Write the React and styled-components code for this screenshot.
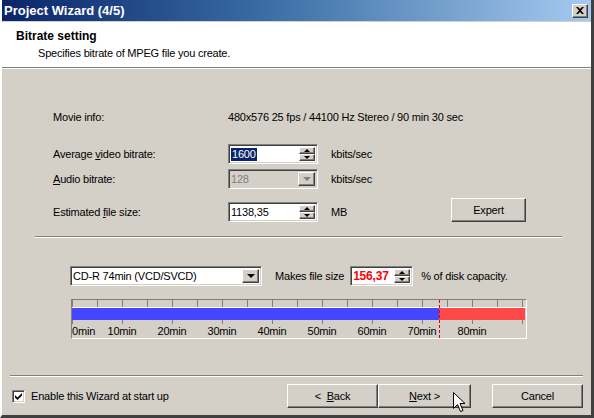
import React from 'react';
import styled, { createGlobalStyle, css } from 'styled-components';

const GlobalStyle = createGlobalStyle`
  html, body {
    margin: 0;
    padding: 0;
    background: #d4d0c8;
  }
  body {
    font-family: "Liberation Sans", Arial, sans-serif;
    font-size: 11px;
    letter-spacing: -0.2px;
    color: #000;
  }
`;

const raised = css`
  background: #d4d0c8;
  border-top: 1px solid #fff;
  border-left: 1px solid #fff;
  border-right: 1px solid #404040;
  border-bottom: 1px solid #404040;
  box-shadow: inset -1px -1px 0 #808080;
`;

const sunken = css`
  border-top: 1px solid #808080;
  border-left: 1px solid #808080;
  border-right: 1px solid #fff;
  border-bottom: 1px solid #fff;
  box-shadow: inset 1px 1px 0 #404040, inset -1px -1px 0 #d4d0c8;
`;

const Window = styled.div`
  width: 594px;
  height: 418px;
  box-sizing: border-box;
  display: flex;
  flex-direction: column;
  background: #d4d0c8;
  border-left: 2px solid #fff;
  border-right: 3px solid #404040;
  border-bottom: 3px solid #404040;
  position: relative;
  overflow: hidden;
`;

const TitleBar = styled.div`
  height: 21px;
  flex: none;
  display: flex;
  align-items: center;
  justify-content: space-between;
  padding: 0 2px 0 2px;
  background: linear-gradient(to right, #0a246a 0%, #3a6ea5 45%, #a6caf0 100%);
  color: #fff;
  font-weight: bold;
  font-size: 13px;
  letter-spacing: 0;
  border-bottom: 1px solid #d4d0c8;
`;

const CloseButton = styled.div`
  ${raised};
  width: 14px;
  height: 12px;
  display: flex;
  align-items: center;
  justify-content: center;
  margin-right: 1px;
`;

const Header = styled.div`
  height: 46px;
  flex: none;
  background: #fff;
  border-bottom: 1px solid #808080;
  box-shadow: 0 1px 0 #fff;
  padding: 7px 0 0 14px;
  box-sizing: border-box;
`;

const HeaderTitle = styled.div`
  font-weight: bold;
  font-size: 12px;
  line-height: 14px;
  letter-spacing: 0;
`;

const HeaderSub = styled.div`
  margin: 4px 0 0 22px;
  line-height: 13px;
`;

const Body = styled.div`
  flex: 1;
  display: flex;
  flex-direction: column;
  padding-top: 1px;
`;

const FieldRow = styled.div`
  display: grid;
  grid-template-columns: 175px 90px 133px 74px;
  align-items: ${(p) => p.$align || 'center'};
  margin-top: ${(p) => p.$top}px;
  padding-left: 51px;
  height: ${(p) => p.$h || 20}px;
`;

const Label = styled.span`
  white-space: nowrap;
  align-self: center;
  u { text-decoration: underline; }
`;

const Info = styled.span`
  grid-column: 2 / span 3;
  white-space: nowrap;
`;

const Unit = styled.span`
  padding-left: 13px;
  align-self: ${(p) => (p.$low ? 'end' : 'center')};
  line-height: 20px;
`;

const Field = styled.div`
  ${sunken};
  box-sizing: border-box;
  width: ${(p) => p.$w}px;
  height: 20px;
  background: ${(p) => (p.$disabled ? '#d4d0c8' : '#fff')};
  display: flex;
  align-items: stretch;
`;

const FieldText = styled.div`
  flex: 1;
  display: flex;
  align-items: center;
  padding-left: 2px;
  color: ${(p) => p.$color || '#000'};
  font-weight: ${(p) => (p.$bold ? 'bold' : 'normal')};
  font-size: ${(p) => (p.$bold ? 12 : 11)}px;
`;

const Selected = styled.span`
  background: #0a246a;
  color: #fff;
  padding: 0 1px;
  line-height: 13px;
`;

const SpinCol = styled.div`
  width: 16px;
  margin: 2px 2px 2px 0;
  display: flex;
  flex-direction: column;
`;

const SpinBtn = styled.div`
  ${raised};
  flex: 1;
  display: flex;
  align-items: center;
  justify-content: center;
`;

const DropBtn = styled.div`
  ${raised};
  width: 15px;
  margin: 2px 2px 2px 0;
  display: flex;
  align-items: center;
  justify-content: center;
`;

const Tri = styled.span`
  width: 0;
  height: 0;
  border-left: ${(p) => p.$s}px solid transparent;
  border-right: ${(p) => p.$s}px solid transparent;
  ${(p) =>
    p.$up
      ? `border-bottom: ${p.$s}px solid ${p.$c || '#000'};`
      : `border-top: ${p.$s}px solid ${p.$c || '#000'};`}
`;

const Button = styled.div`
  ${raised};
  box-sizing: border-box;
  width: ${(p) => p.$w}px;
  height: 24px;
  display: flex;
  align-items: center;
  justify-content: center;
  u { text-decoration: underline; }
`;

const Separator = styled.div`
  height: 1px;
  background: #808080;
  border-bottom: 1px solid #fff;
  margin: ${(p) => p.$m};
`;

const DiskRow = styled.div`
  display: flex;
  align-items: center;
  margin-top: 27px;
  padding-left: 68px;
  height: 21px;
`;

const Gap = styled.span`
  width: ${(p) => p.$w}px;
  flex: ${(p) => (p.$grow ? 1 : 'none')};
`;

const ScaleFrame = styled.div`
  margin: 13px 0 0 69px;
  width: 456px;
  box-sizing: border-box;
  border-top: 1px solid #808080;
  border-left: 1px solid #808080;
  border-right: 1px solid #fff;
  border-bottom: 1px solid #fff;
  position: relative;
`;

const Ticks = styled.div`
  height: ${(p) => p.$h}px;
  background-image: linear-gradient(to right, #808080 0 1px, transparent 1px);
  background-size: ${(p) => p.$step}px 100%;
  background-repeat: repeat-x;
`;

const BarLine = styled.div`
  height: 1px;
  background: #fff;
`;

const Bar = styled.div`
  height: 12px;
  display: flex;
`;

const BarFill = styled.div`
  background: ${(p) => p.$c};
  height: 100%;
`;

const Labels = styled.div`
  height: 14px;
  position: relative;
`;

const TickLabel = styled.span`
  position: absolute;
  top: 1px;
  line-height: 13px;
  white-space: nowrap;
  transform: ${(p) => (p.$first ? 'none' : 'translateX(-50%)')};
`;

const DiskMark = styled.div`
  position: absolute;
  top: 0;
  bottom: 0;
  width: 0;
  border-left: 1px dashed #e00000;
`;

const Footer = styled.div`
  margin-top: auto;
  padding-bottom: 7px;
`;

const FooterRow = styled.div`
  display: flex;
  align-items: center;
  padding: 7px 8px 0 10px;
`;

const Check = styled.div`
  ${sunken};
  background: #fff;
  width: 13px;
  height: 13px;
  box-sizing: border-box;
  display: flex;
  align-items: center;
  justify-content: center;
  margin-right: 6px;
`;

const Cursor = styled.svg`
  position: absolute;
  left: 451px;
  top: 392px;
`;

function Spin() {
  return (
    <SpinCol>
      <SpinBtn><Tri $up $s={3} /></SpinBtn>
      <SpinBtn><Tri $s={3} /></SpinBtn>
    </SpinCol>
  );
}

const labels = [0, 10, 20, 30, 40, 50, 60, 70, 80];

export default function App() {
  return (
    <>
      <GlobalStyle />
      <Window>
        <TitleBar>
          <span>Project Wizard (4/5)</span>
          <CloseButton>
            <svg width="8" height="7" viewBox="0 0 8 7">
              <path d="M0 0 L2 0 L4 2 L6 0 L8 0 L5 3.5 L8 7 L6 7 L4 5 L2 7 L0 7 L3 3.5 Z" fill="#000" />
            </svg>
          </CloseButton>
        </TitleBar>
        <Header>
          <HeaderTitle>Bitrate setting</HeaderTitle>
          <HeaderSub>Specifies bitrate of MPEG file you create.</HeaderSub>
        </Header>
        <Body>
          <FieldRow $top={41} $h={14}>
            <Label>Movie info:</Label>
            <Info>480x576 25 fps / 44100 Hz Stereo / 90 min 30 sec</Info>
          </FieldRow>
          <FieldRow $top={20}>
            <Label>Average <u>v</u>ideo bitrate:</Label>
            <Field $w={90}>
              <FieldText><Selected>1600</Selected></FieldText>
              <Spin />
            </Field>
            <Unit>kbits/sec</Unit>
          </FieldRow>
          <FieldRow $top={5}>
            <Label><u>A</u>udio bitrate:</Label>
            <Field $w={90} $disabled>
              <FieldText $color="#808080">128</FieldText>
              <DropBtn><Tri $s={4} $c="#808080" /></DropBtn>
            </Field>
            <Unit>kbits/sec</Unit>
          </FieldRow>
          <FieldRow $top={9} $h={24} $align="end">
            <Label style={{ paddingTop: 4 }}>Estimated <u>f</u>ile size:</Label>
            <Field $w={90}>
              <FieldText>1138,35</FieldText>
              <Spin />
            </Field>
            <Unit $low>MB</Unit>
            <Button $w={75}>Expert</Button>
          </FieldRow>
          <Separator $m="14px 29px 0 33px" />
          <DiskRow>
            <Field $w={192}>
              <FieldText>CD-R 74min (VCD/SVCD)</FieldText>
              <DropBtn><Tri $s={4} /></DropBtn>
            </Field>
            <Gap $w={13} />
            <span>Makes file size</span>
            <Gap $w={6} />
            <Field $w={63}>
              <FieldText $color="#ff0000" $bold>156,37</FieldText>
              <Spin />
            </Field>
            <Gap $w={8} />
            <span>% of disk capacity.</span>
          </DiskRow>
          <ScaleFrame>
            <Ticks $h={7} $step={25} />
            <BarLine />
            <Bar>
              <BarFill $c="#4646ff" style={{ width: 367 }} />
              <BarFill $c="#ff4848" style={{ width: 86 }} />
            </Bar>
            <Ticks $h={4} $step={50} />
            <Labels>
              {labels.map((m, i) => (
                <TickLabel key={m} $first={i === 0} style={{ left: i * 50 }}>
                  {m}min
                </TickLabel>
              ))}
            </Labels>
            <DiskMark style={{ left: 367 }} />
          </ScaleFrame>
          <Footer>
            <Separator $m="0 8px 0 8px" />
            <FooterRow>
              <Check>
                <svg width="7" height="7" viewBox="0 0 7 7">
                  <path d="M0 2 L0 4.5 L2.5 7 L7 2.5 L7 0 L2.5 4.5 Z" fill="#000" />
                </svg>
              </Check>
              <span>Enable this Wizard at start up</span>
              <Gap $grow />
              <Button $w={91}>&lt;&nbsp;&nbsp;<u>B</u>ack</Button>
              <Button $w={93}><u>N</u>ext &gt;</Button>
              <Gap $w={21} />
              <Button $w={91}>Cancel</Button>
            </FooterRow>
          </Footer>
        </Body>
        <Cursor width="13" height="21" viewBox="0 0 13 21">
          <path d="M0.5 0.5 L0.5 16.5 L4.5 12.5 L7.5 19.5 L10 18.5 L7 11.5 L12 11.5 Z" fill="#fff" stroke="#000" strokeWidth="1" />
        </Cursor>
      </Window>
    </>
  );
}
